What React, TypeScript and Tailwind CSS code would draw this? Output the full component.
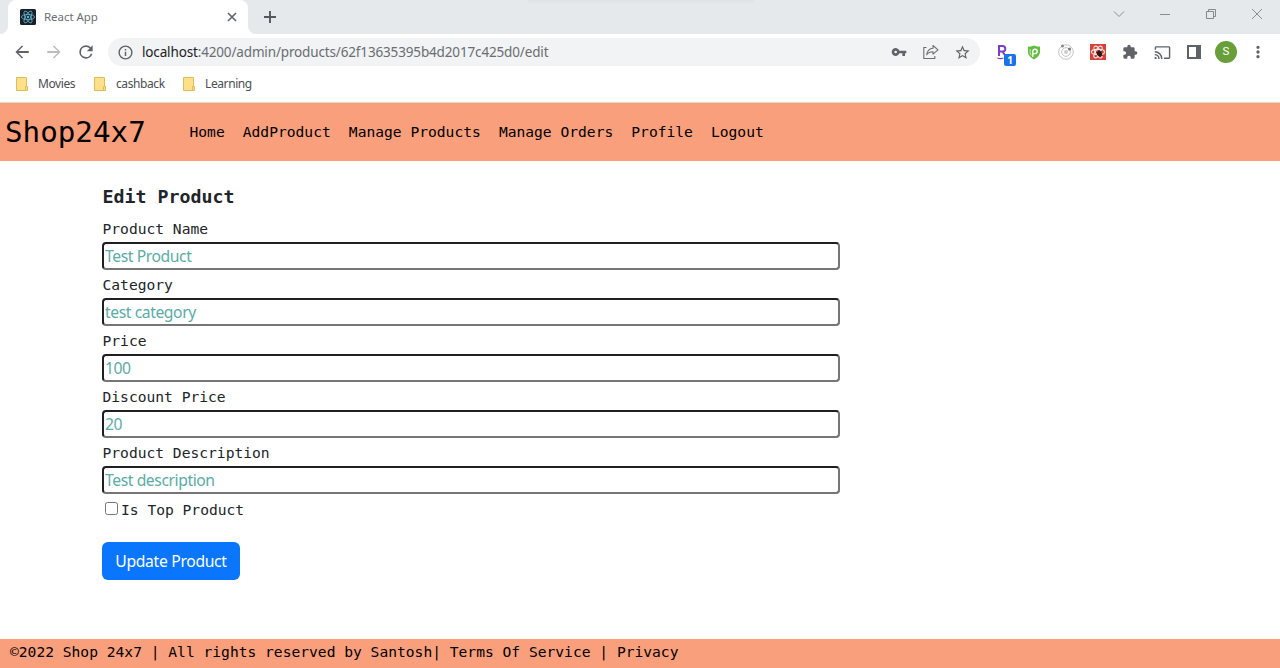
import React from 'react';

const mono = "font-['DejaVu_Sans_Mono',monospace]";
const segoe = "font-['Noto_Sans','Open_Sans',sans-serif]";

function Atom({ color, width }: { color: string; width: number }) {
  return (
    <g stroke={color} strokeWidth={width} fill="none">
      <ellipse cx="8" cy="8" rx="6.6" ry="2.6" />
      <ellipse cx="8" cy="8" rx="6.6" ry="2.6" transform="rotate(60 8 8)" />
      <ellipse cx="8" cy="8" rx="6.6" ry="2.6" transform="rotate(120 8 8)" />
      <circle cx="8" cy="8" r="1.2" fill={color} stroke="none" />
    </g>
  );
}

function TabStrip() {
  return (
    <div className="flex h-[34px] bg-[#e5e9ec]">
      <svg className="h-[34px] w-2" viewBox="0 0 8 34"><path d="M8 26v8H0a8 8 0 0 0 8-8z" fill="#fff" /></svg>
      <div className="flex w-[240px] items-center rounded-t-lg bg-white pr-[10px] pl-3">
        <svg className="size-4" viewBox="0 0 16 16">
          <rect width="16" height="16" rx="1.5" fill="#1a2029" />
          <Atom color="#5fb9d3" width={0.8} />
        </svg>
        <span className="ml-2 text-[11.5px] tracking-[-0.05px] text-[#6b6f73]">React App</span>
        <svg className="ml-auto size-3" viewBox="0 0 12 12" stroke="#5f6368" strokeWidth="1.6"><path d="M2 2l8 8M10 2l-8 8" /></svg>
      </div>
      <svg className="h-[34px] w-2" viewBox="0 0 8 34"><path d="M0 26v8h8a8 8 0 0 1-8-8z" fill="#fff" /></svg>
      <svg className="mt-[11px] ml-2 size-3" viewBox="0 0 12 12" stroke="#54585c" strokeWidth="1.9"><path d="M6 0v12M0 6h12" /></svg>
      <div className="ml-[252px] h-1 w-[226px] bg-linear-to-b from-[#dfe3e6] to-[#e5e9ec]" />
      <div className="ml-auto flex h-7 items-center gap-[34px] pr-[17px]">
        <svg className="size-3" viewBox="0 0 12 12" stroke="#8b8e91" fill="none"><path d="M1 3.5l5 5 5-5" /></svg>
        <svg className="size-3" viewBox="0 0 12 12" stroke="#8b8e91"><path d="M1 6.5h10" /></svg>
        <svg className="size-3" viewBox="0 0 12 12" stroke="#85888b" fill="none"><path d="M1.5 3.5h7v7h-7zM3.5 3.5v-2h7v7h-2" /></svg>
        <svg className="size-3" viewBox="0 0 12 12" stroke="#8b8e91"><path d="M1 1l10 10M11 1L1 11" /></svg>
      </div>
    </div>
  );
}

function Glyph({ d, color = '#5f6368', className = 'size-[18px]' }: { d: string; color?: string; className?: string }) {
  return <svg className={className} viewBox="0 0 24 24" fill={color}><path d={d} /></svg>;
}

const back = 'M21 10.800H7.200l6.200-6.200L12 3.200 3.200 12l8.800 8.800 1.400-1.400-6.200-6.200H21z';
const forward = 'M3 10.800h13.800l-6.200-6.200L12 3.200 20.800 12 12 20.800l-1.400-1.400 6.200-6.200H3z';
const reload = 'M17.65 6.35A7.96 7.96 0 0 0 12 4a8 8 0 1 0 7.73 10h-2.08A6 6 0 1 1 12 6c1.66 0 3.14.69 4.22 1.78L13 11h7V4l-2.35 2.35z';
const info = 'M11 7h2v2h-2zm0 4h2v6h-2zm1-9a10 10 0 1 0 0 20 10 10 0 0 0 0-20zm0 18a8 8 0 1 1 0-16 8 8 0 0 1 0 16z';
const key = 'M12.65 10A6 6 0 1 0 12.65 14H17v4h4v-4h2v-4H12.65zM7 14a2 2 0 1 1 0-4 2 2 0 0 1 0 4z';
const star = 'M22 9.24l-7.19-.62L12 2 9.19 8.63 2 9.24l5.46 4.73L5.82 21 12 17.27 18.18 21l-1.63-7.03L22 9.24zM12 15.4l-3.76 2.27 1-4.28-3.32-2.88 4.38-.38L12 6.1l1.71 4.04 4.38.38-3.32 2.88 1 4.28L12 15.4z';
const puzzle = 'M20.5 11H19V7a2 2 0 0 0-2-2h-4V3.5a2.5 2.5 0 0 0-5 0V5H4a2 2 0 0 0-2 2v3.8h1.5a2.7 2.7 0 0 1 0 5.4H2V20a2 2 0 0 0 2 2h3.8v-1.5a2.7 2.7 0 0 1 5.4 0V22H17a2 2 0 0 0 2-2v-4h1.500a2.5 2.5 0 0 0 0-5z';
const cast = 'M21 3H3a2 2 0 0 0-2 2v3h2V5h18v14h-7v2h7a2 2 0 0 0 2-2V5a2 2 0 0 0-2-2zM1 18v3h3a3 3 0 0 0-3-3zm0-4v2a5 5 0 0 1 5 5h2a7 7 0 0 0-7-7zm0-4v2a9 9 0 0 1 9 9h2A11 11 0 0 0 1 10z';

function Toolbar() {
  return (
    <div className="flex h-9 items-center bg-white pl-[13px]">
      <Glyph d={back} />
      <Glyph d={forward} color="#babcbe" className="ml-[14px] size-[18px]" />
      <Glyph d={reload} className="ml-[13px] size-5" />
      <div className="ml-3 flex h-7 w-[872px] items-center rounded-full bg-[#f1f3f4] pr-[9.500px] pl-[9px]">
        <Glyph d={info} className="size-[17px]" />
        <span className="ml-2 text-[13.5px] tracking-[-0.15px] text-[#6a6d71]">
          <span className="text-[#202124]">localhost</span>:4200/admin/products/62f13635395b4d2017c425d0/edit
        </span>
        <Glyph d={key} className="ml-auto size-4" />
        <svg className="ml-4 size-4" viewBox="0 0 16 16" fill="none" stroke="#6b6f73" strokeWidth="1.1">
          <path d="M3.500 3.500H.8v11h11V12" />
          <path d="M10 1.500l5 4.300-5 4.300V7.700C7 7.700 5.200 8.600 3.700 10.800 4.200 7.200 6.300 4.500 10 4.200z" strokeLinejoin="round" />
        </svg>
        <Glyph d={star} className="ml-[15px] size-[17px]" />
      </div>
      <div className="ml-4 flex flex-1 items-center">
        <div className="relative flex h-4 w-5 items-start">
          <svg className="h-4 w-3" viewBox="0 0 12 16" fill="none" stroke="#7a3fc4" strokeWidth="2">
            <path d="M3 12V2h3.500a2.800 2.800 0 0 1 0 5.600H3M6.500 7.500L9.500 12" />
            <path d="M1.500 14q3 1.200 6 0" strokeWidth="1.300" />
          </svg>
          <span className="absolute top-[10px] left-2 flex h-3 w-3 items-center justify-center rounded-[2px] bg-[#1a73e8] text-[10px] font-bold text-white">1</span>
        </div>
        <svg className="ml-[11px] h-[15px] w-[14px]" viewBox="0 0 14 15">
          <path d="M1 1.500Q4 2 7 .5 10 2 13 1.500V7q0 4-6 7.500Q1 11 1 7z" fill="#63bd3c" />
          <path d="M5.800 12V6.200A2.200 2.200 0 1 1 8 8.600H6" fill="none" stroke="#fff" strokeWidth="1.400" />
          <path d="M3.200 4V8l1.200 2.500" fill="none" stroke="#d9f2cd" strokeWidth=".8" />
        </svg>
        <svg className="ml-[17px] size-4" viewBox="0 0 16 16" fill="none" stroke="#c3c4c6">
          <circle cx="8" cy="8" r="7.300" /><circle cx="8" cy="8" r="4.300" />
          <circle cx="8" cy="8" r="2" fill="#ccc" stroke="none" />
          <circle cx="4.500" cy="2" r="1.500" fill="#888" stroke="none" /><circle cx="11.500" cy="5" r="1.500" fill="#777" stroke="none" />
        </svg>
        <svg className="ml-4 size-4" viewBox="0 0 16 16">
          <rect width="16" height="16" fill="#d84138" />
          <Atom color="#fbe4e1" width={1.2} />
          <ellipse cx="9.500" cy="9.500" rx="2.500" ry="3" fill="#301514" transform="rotate(-35 9.500 9.500)" />
          <path d="M6 8l7 4M6.500 11.500l6-5M9 6l1 7.500" stroke="#301514" strokeWidth=".8" />
        </svg>
        <Glyph d={puzzle} className="ml-4 size-4" />
        <Glyph d={cast} className="ml-4 size-[17px]" />
        <svg className="ml-4 size-[14px]" viewBox="0 0 14 14"><path d="M0 0h14v14H0zM2 2v10h7V2z" fill="#5f6368" fillRule="evenodd" /></svg>
        <span className="ml-[14px] flex size-[22px] items-center justify-center rounded-full bg-[#689f38] font-['Roboto',sans-serif] text-[11.5px] text-white">S</span>
        <Glyph d="M12 8a2.200 2.200 0 1 0 0-4.400A2.200 2.200 0 0 0 12 8zm0 1.800a2.200 2.200 0 1 0 0 4.400 2.200 2.200 0 0 0 0-4.400zm0 6.200a2.200 2.200 0 1 0 0 4.400 2.200 2.200 0 0 0 0-4.400z" className="ml-3 size-[18px]" />
      </div>
    </div>
  );
}

function Bookmark({ label, className }: { label: string; className: string }) {
  return (
    <div className={`flex items-center ${className}`}>
      <svg className="h-[14px] w-3" viewBox="0 0 12 14" fill="#ffe08a" stroke="#dfbd55">
        <path d="M.5.5h10v13H.5z" /><path d="M9.500 9.500h2v4h-2z" />
      </svg>
      <span className="ml-[10px] text-[12px] tracking-[-0.4px] whitespace-nowrap text-[#4b4e52]">{label}</span>
    </div>
  );
}

function Field({ label, value }: { label: string; value: string }) {
  return (
    <label className="block h-14">
      <span className={`block h-7 pl-[0.5px] text-[14.62px] leading-[30px] text-[#212529] ${mono}`}>{label}</span>
      <input
        defaultValue={value}
        className="block h-7 w-full rounded-[4px] border-2 border-t-[#1f2023] border-r-[#767676] border-b-[#767676] border-l-[#1f2023] bg-white px-px text-[15.7px] tracking-[-0.42px] text-[#5aaca5] outline-none"
      />
    </label>
  );
}

export default function App() {
  return (
    <div className={`flex h-[668px] w-[1280px] flex-col overflow-hidden bg-white ${segoe}`}>
      <TabStrip />
      <Toolbar />
      <div className="flex h-8 items-center border-b border-white bg-white pb-[3px] pl-4">
        <Bookmark label="Movies" className="w-[78px]" />
        <Bookmark label="cashback" className="w-[89px]" />
        <Bookmark label="Learning" className="" />
      </div>
      <nav className={`flex h-[59px] items-center border-t border-[#e3d5cf] bg-[#f99f7b] pl-[5px] text-black ${mono}`}>
        <span className="w-[184.500px] pt-0.5 text-[29.23px]">Shop24x7</span>
        <div className="flex gap-[18.100px] text-[14.62px]">
          {['Home', 'AddProduct', 'Manage Products', 'Manage Orders', 'Profile', 'Logout'].map((t) => <span key={t}>{t}</span>)}
        </div>
      </nav>
      <main className="ml-[102px] w-[738px] flex-1 pt-[22px]">
        <h1 className={`h-[31px] pl-[0.5px] text-[18.27px] leading-[27px] font-bold text-[#212529] ${mono}`}>Edit Product</h1>
        <Field label="Product Name" value="Test Product" />
        <Field label="Category" value="test category" />
        <Field label="Price" value="100" />
        <Field label="Discount Price" value="20" />
        <Field label="Product Description" value="Test description" />
        <label className={`flex h-8 items-center text-[14.62px] text-[#212529] ${mono}`}>
          <input type="checkbox" className="mr-[3px] mb-1 ml-[3px] size-[13px] appearance-none rounded-[2.500px] border border-[#767676] bg-white" />
          Is Top Product
        </label>
        <button className="mt-4 h-[38px] w-[138px] rounded-md bg-[#0a76fd] pt-0.5 text-[15.700px] tracking-[-0.320px] text-white">Update Product</button>
      </main>
      <footer className={`h-[29px] bg-[#f99f7b] pl-[10px] text-[14.62px] leading-[26px] whitespace-pre text-black ${mono}`}>
        ©2022 Shop 24x7 | All rights reserved by Santosh| Terms Of Service | Privacy
      </footer>
    </div>
  );
}
